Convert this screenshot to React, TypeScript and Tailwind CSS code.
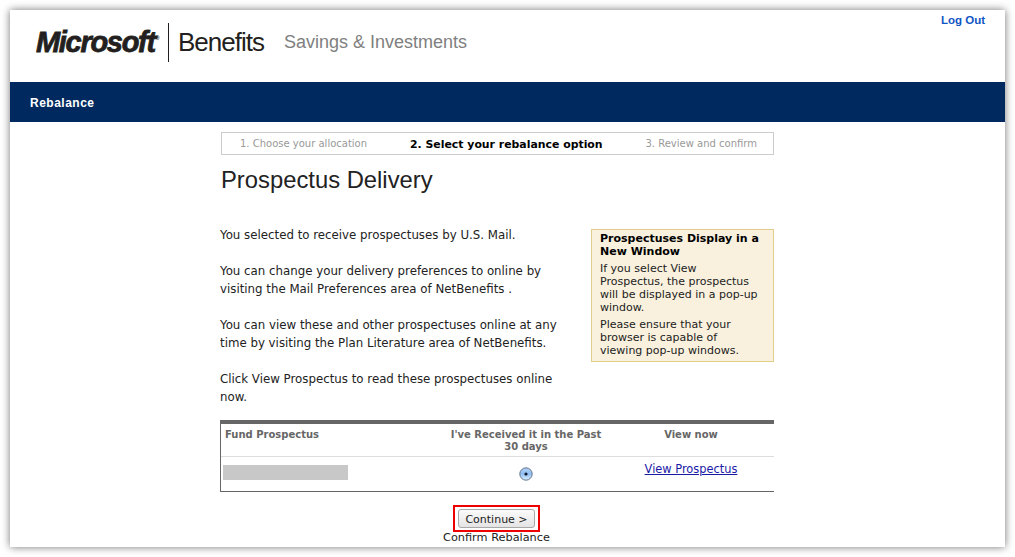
const Radio = () => (
  <svg width="14" height="14" viewBox="0 0 14 14">
    <defs>
      <linearGradient id="radio" x1="0" y1="0" x2="0" y2="1">
        <stop offset="0" stopColor="#b4d2f4" />
        <stop offset="0.5" stopColor="#8fbef2" />
        <stop offset="1" stopColor="#dff1fd" />
      </linearGradient>
    </defs>
    <circle cx="7" cy="7" r="6.2" fill="url(#radio)" stroke="#66768f" strokeWidth="1" />
    <circle cx="7" cy="7" r="1.6" fill="#10182a" />
  </svg>
);

const App = () => {
  return (
    <div className="h-[557px] w-[1015px] overflow-hidden bg-white px-[10px] pt-[10px] font-['DejaVu_Sans',Verdana,sans-serif]">
      <div className="h-[537px] w-[995px] overflow-hidden bg-white shadow-[0_0_8px_rgba(0,0,0,0.55)]">
        <div className="flex h-[72px] items-start justify-between">
          <div className="flex items-center pl-[26px] pt-[13px] font-['Liberation_Sans',Arial,sans-serif]">
            <span className="flex h-[39px] w-[133px] items-center border-r border-[#231f20] text-[29px] font-bold italic tracking-[-1.3px] text-[#231f20] [-webkit-text-stroke:0.8px_#231f20]">
              Microsoft
              <span className="mb-[8px] ml-[1px] text-[5px] tracking-normal [-webkit-text-stroke:0]">®</span>
            </span>
            <span className="ml-[9px] text-[26px] tracking-[-1px] text-[#231f20]">Benefits</span>
            <span className="ml-[20px] text-[18px] text-[#808080]">Savings &amp; Investments</span>
          </div>
          <a className="pr-[20px] pt-[2px] font-['Liberation_Sans',Arial,sans-serif] text-[11.5px] font-bold text-[#0f55c4]">Log Out</a>
        </div>

        <div className="flex h-10 items-center bg-[#002a5f] pl-5 pt-[1px] font-['Liberation_Sans',Arial,sans-serif] text-[12px] font-bold tracking-[0.5px] text-white">
          Rebalance
        </div>

        <div className="ml-[211px] w-[553px] pt-[10px]">
          <div className="flex h-[23px] items-center justify-between border border-[#cccccc] pl-[18px] pr-[16px] text-[10px] text-[#999999]">
            <span>1. Choose your allocation</span>
            <span className="pt-[3px] text-[10.9px] font-bold text-black">2. Select your rebalance option</span>
            <span>3. Review and confirm</span>
          </div>

          <h1 className="mt-[11px] font-['Liberation_Sans',Arial,sans-serif] text-[23.8px] leading-[28px] text-[#222222]">
            Prospectus Delivery
          </h1>

          <div className="mt-[31px] flex items-start justify-between">
            <div className="-ml-px w-[342px] text-[11.8px] leading-[18px] text-[#222222]">
              <p className="mt-[1px]">You selected to receive prospectuses by U.S. Mail.</p>
              <p className="mt-[18px]">
                You can change your delivery preferences to online by visiting the Mail Preferences area of NetBenefits .
              </p>
              <p className="mt-[18px]">
                You can view these and other prospectuses online at any time by visiting the Plan Literature area of NetBenefits.
              </p>
              <p className="mt-[18px]">Click View Prospectus to read these prospectuses online now.</p>
            </div>
            <div className="mt-[4px] h-[133px] w-[183px] border border-[#e3cd8a] bg-[#f9f1dd] pl-[8px] pr-[13px] pt-[2px] text-[11px] leading-[13px] text-[#222222]">
              <p className="-mr-[9px] font-bold text-black">Prospectuses Display in a New Window</p>
              <p className="mt-[4px]">If you select View Prospectus, the prospectus will be displayed in a pop-up window.</p>
              <p className="mt-[4px]">Please ensure that your browser is capable of viewing pop-up windows.</p>
            </div>
          </div>

          <div className="-ml-px mt-[14px] h-[72px] border-b border-l border-t-4 border-b-[#666666] border-l-[#666666] border-t-[#666666] text-[10px]">
            <div className="flex h-[33px] border-b border-[#dddddd] pt-[5px] font-bold leading-[12px] text-[#666666]">
              <span className="w-[228px] pl-[4px]">Fund Prospectus</span>
              <span className="w-[154px] text-center">I&apos;ve Received it in the Past 30 days</span>
              <span className="ml-[9px] w-[158px] text-center">View now</span>
            </div>
            <div className="flex pt-[8px]">
              <div className="w-[228px] pl-[2px]">
                <div className="h-[15px] w-[125px] bg-[#c8c8c8]" />
              </div>
              <div className="flex w-[154px] justify-center pt-[2px]">
                <Radio />
              </div>
              <a className="ml-[9px] h-[8px] w-[158px] text-center text-[11.4px] leading-[8px] text-[#1a1aa6] underline">
                View Prospectus
              </a>
            </div>
          </div>

          <div className="flex flex-col items-center pt-[13px]">
            <div className="mr-[2px] h-[27px] w-[87px] border-2 border-[#ee0000] px-[3px] py-[2px]">
              <button className="flex h-[19px] w-[77px] items-center justify-center rounded-[3px] border border-[#a8a8a8] bg-gradient-to-b from-[#fbfbfb] to-[#e4e4e4] pt-[3px] text-[11px] leading-[14px] text-[#222222]">
                Continue &gt;
              </button>
            </div>
            <span className="mr-[2px] text-[11.3px] leading-[12px] text-[#222222]">Confirm Rebalance</span>
          </div>
        </div>
      </div>
    </div>
  );
};

export default App;
